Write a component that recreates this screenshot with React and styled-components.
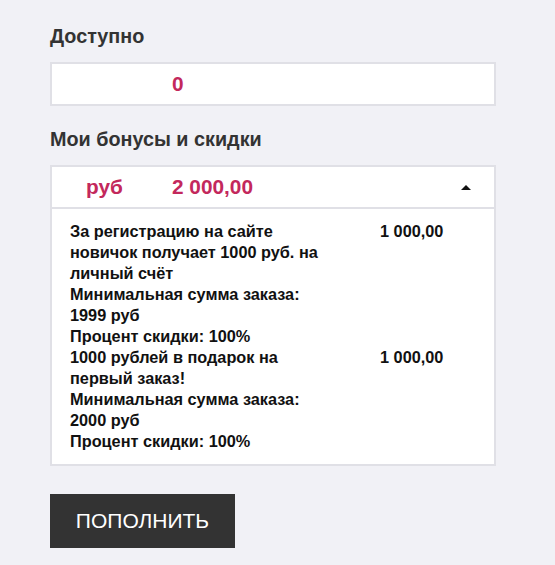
import styled, { createGlobalStyle } from "styled-components";

const bonuses = [
    {
        lines: [
            "За регистрацию на сайте новичок получает 1000 руб. на личный счёт",
            "Минимальная сумма заказа: 1999 руб",
            "Процент скидки: 100%",
        ],
        amount: "1 000,00",
    },
    {
        lines: [
            "1000 рублей в подарок на первый заказ!",
            "Минимальная сумма заказа: 2000 руб",
            "Процент скидки: 100%",
        ],
        amount: "1 000,00",
    },
];

const App = () => {
    return (
        <>
            <GlobalStyle />
            <Page>
                <Title>Доступно</Title>
                <Box>
                    <SumRow>
                        <span></span>
                        <Accent>0</Accent>
                    </SumRow>
                </Box>

                <Title>Мои бонусы и скидки</Title>
                <Box $last>
                    <SumRow $head>
                        <Accent>руб</Accent>
                        <Accent>2 000,00</Accent>
                        <Arrow />
                    </SumRow>
                    <Details>
                        {bonuses.map((b, i) => (
                            <Bonus key={i}>
                                <div>
                                    {b.lines.map((l, j) => (
                                        <div key={j}>{l}</div>
                                    ))}
                                </div>
                                <div>{b.amount}</div>
                            </Bonus>
                        ))}
                    </Details>
                </Box>

                <TopUp>ПОПОЛНИТЬ</TopUp>
            </Page>
        </>
    );
};

const GlobalStyle = createGlobalStyle`
    *{
        box-sizing: border-box;
    }
    body{
        margin: 0;
        background: #f1f1f6;
        font-family: "Liberation Sans", Arial, sans-serif;
    }
`;

const Page = styled.div`
    width: 496px;
    padding: 24px 0 16px 50px;
`;

const Title = styled.h3`
    margin: 0 0 14px;
    font-size: 19.8px;
    line-height: 24px;
    font-weight: 700;
    color: #333;
`;

const Box = styled.div`
    background: #fff;
    border: 2px solid #e0e0e6;
    margin-bottom: ${(p) => (p.$last ? "28px" : "21px")};
`;

const SumRow = styled.div`
    display: grid;
    grid-template-columns: 86px 1fr auto;
    align-items: center;
    height: ${(p) => (p.$head ? "42px" : "40px")};
    padding: 0 23px 0 34px;
    border-bottom: ${(p) => (p.$head ? "2px solid #e0e0e6" : "none")};
`;

const Accent = styled.span`
    color: #c3285c;
    font-size: 20.8px;
    font-weight: 700;
`;

const Arrow = styled.span`
    width: 0;
    height: 0;
    border-left: 5px solid transparent;
    border-right: 5px solid transparent;
    border-bottom: 5px solid #111;
`;

const Details = styled.div`
    padding: 11.5px 18px 12.5px;
    font-size: 16.3px;
    line-height: 21px;
    font-weight: 700;
    color: #111;
`;

const Bonus = styled.div`
    display: grid;
    grid-template-columns: 258px 1fr;
    column-gap: 52px;
`;

const TopUp = styled.button`
    display: block;
    width: 185px;
    height: 54px;
    border: none;
    background: #333;
    color: #fff;
    font-family: "Liberation Sans", Arial, sans-serif;
    font-size: 21px;
    cursor: pointer;
    :hover{
        background: #222;
    }
`;

export default App;
